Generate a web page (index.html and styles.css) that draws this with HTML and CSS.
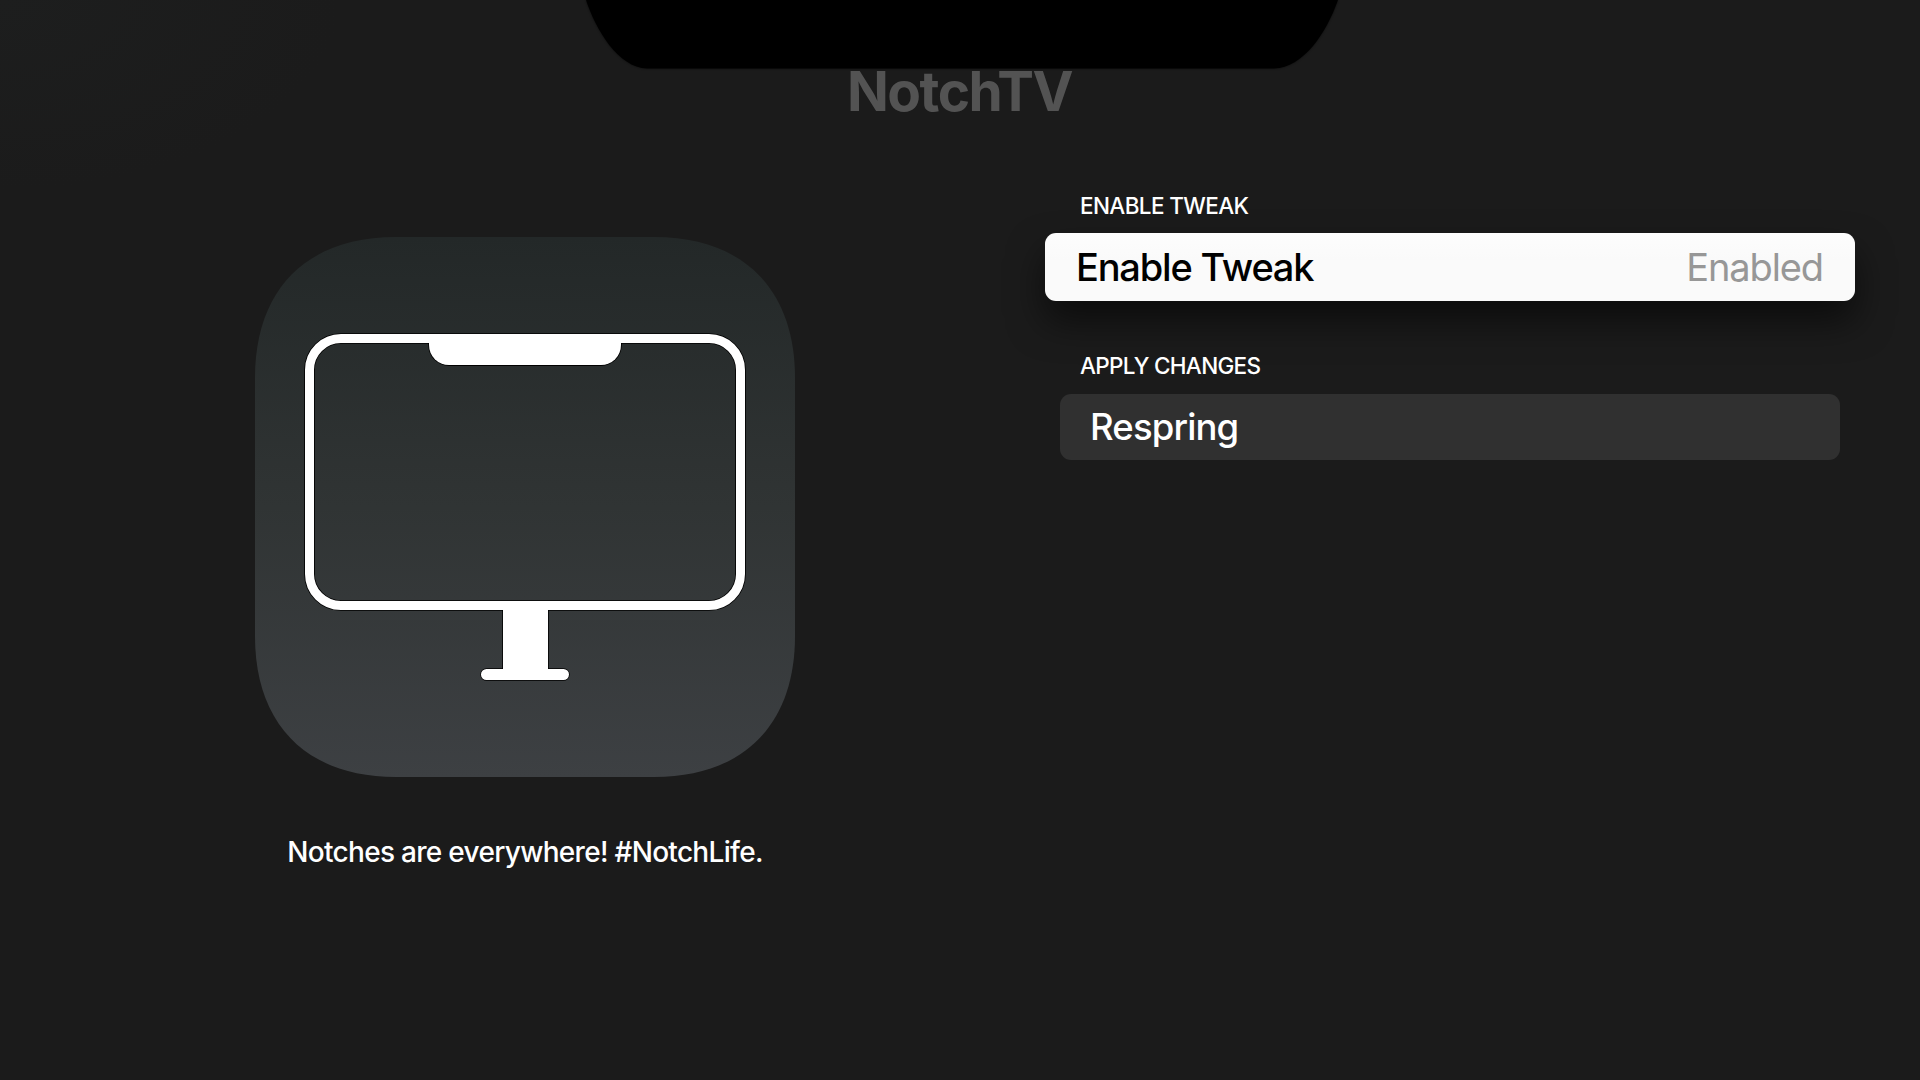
FILE: index.html
```html
<!DOCTYPE html>
<html lang="en">
<head>
<meta charset="utf-8">
<title>NotchTV</title>
<link rel="stylesheet" href="styles.css">
</head>
<body>
<div class="screen">
  <svg class="notch" width="756" height="70" viewBox="0 0 756 70" aria-hidden="true">
    <path d="M2 0C12 30 34 67.500 63 68.500H690C719 67.500 742 34 754 0Z"/>
  </svg>
  <header class="header"><h1 class="title">NotchTV</h1></header>
  <main class="content">
    <section class="about">
      <svg class="app-icon" width="540" height="540" viewBox="0 0 540 540" role="img" aria-label="NotchTV">
        <defs>
          <linearGradient id="plate" x1="0" y1="0" x2="0" y2="1">
            <stop offset="0" stop-color="#232828"/>
            <stop offset=".5" stop-color="#303434"/>
            <stop offset="1" stop-color="#3d4043"/>
          </linearGradient>
        </defs>
        <path fill="url(#plate)" d="M141 0H399C488 0 540 52 540 141V399C540 488 488 540 399 540H141C52 540 0 488 0 399V141C0 52 52 0 141 0Z"/>
        <g fill="#000">
          <rect x="54.500" y="101.500" width="431" height="267" rx="31.500" fill="none" stroke="#000" stroke-width="10.700"/>
          <path d="M173.200 104V108A20.800 20.800 0 0 0 194 128.900H346A20.800 20.800 0 0 0 366.800 108V104Z"/>
          <path d="M247.200 370H293.800V440H247.200Z"/>
          <rect x="225.300" y="431.200" width="89.400" height="12.600" rx="6.300"/>
        </g>
        <g fill="#fff">
          <rect x="54.500" y="101.500" width="431" height="267" rx="31.500" fill="none" stroke="#fff" stroke-width="9"/>
          <path d="M174 102V108A20 20 0 0 0 194 128H346A20 20 0 0 0 366 108V102Z"/>
          <path d="M248 368H293V436H248Z"/>
          <rect x="226" y="432" width="88" height="11" rx="5.500"/>
        </g>
      </svg>
      <p class="tagline">Notches are everywhere! #NotchLife.</p>
    </section>
    <section class="settings">
      <h2 class="label">ENABLE TWEAK</h2>
      <div class="row row-focused">
        <span class="row-name">Enable Tweak</span>
        <span class="row-value">Enabled</span>
      </div>
      <h2 class="label label-apply">APPLY CHANGES</h2>
      <div class="row row-plain"><span class="row-name">Respring</span></div>
    </section>
  </main>
</div>
</body>
</html>
```
FILE: styles.css
```css
* { box-sizing: border-box; }

body {
  margin: 0;
  background: #1b1b1b;
  color: #fff;
  font-family: Inter, "Liberation Sans", sans-serif;
}

h1, h2, p { margin: 0; }

.screen {
  position: relative;
  width: 1920px;
  height: 1080px;
  overflow: hidden;
  background: radial-gradient(ellipse 340px 190px at 0 0, #1d1e1e, #1b1b1b) #1b1b1b;
}

/* The notch hangs over the top edge of the screen. */
.notch {
  position: absolute;
  top: 0;
  left: 584px;
  z-index: 1;
  fill: #000;
  filter: drop-shadow(0 0 1px rgba(0, 0, 0, 0.6));
}

.header {
  height: 192px;
  padding: 58px 1px 0 0;
  text-align: center;
}

.title {
  color: #535353;
  font-size: 55px;
  font-weight: 700;
  line-height: 66px;
  letter-spacing: -1.5px;
}

.content { display: flex; }

.about {
  display: flex;
  flex-direction: column;
  align-items: center;
  gap: 58px;
  width: 1045px;
  padding: 45px 0 0 5px;
}

.app-icon { display: block; }

.tagline {
  font-size: 28px;
  font-weight: 450;
  line-height: 34px;
  letter-spacing: -0.7px;
}

.settings { width: 810px; }

.label {
  padding-left: 35px;
  font-size: 22.5px;
  font-weight: 500;
  line-height: 28px;
  letter-spacing: -0.63px;
}

.label-apply {
  margin-top: 51px;
  letter-spacing: -0.68px;
}

.row {
  display: flex;
  align-items: center;
  justify-content: space-between;
  border-radius: 11px;
}

.row-focused {
  height: 68px;
  margin-top: 13px;
  padding: 0 32px 0 31px;
  background: linear-gradient(#fdfdfd, #fafafa 40%);
  box-shadow: 0 20px 36px rgba(0, 0, 0, 0.55);
  color: #000;
  font-size: 38px;
  letter-spacing: -1.2px;
}

.row-plain {
  height: 66px;
  margin: 14px 15px 0;
  padding: 0 30px;
  background: #303030;
  font-size: 36.5px;
  letter-spacing: -0.85px;
}

.row-name { font-weight: 500; }

.row-value {
  color: #979797;
  font-weight: 400;
  letter-spacing: -1.1px;
}
```
